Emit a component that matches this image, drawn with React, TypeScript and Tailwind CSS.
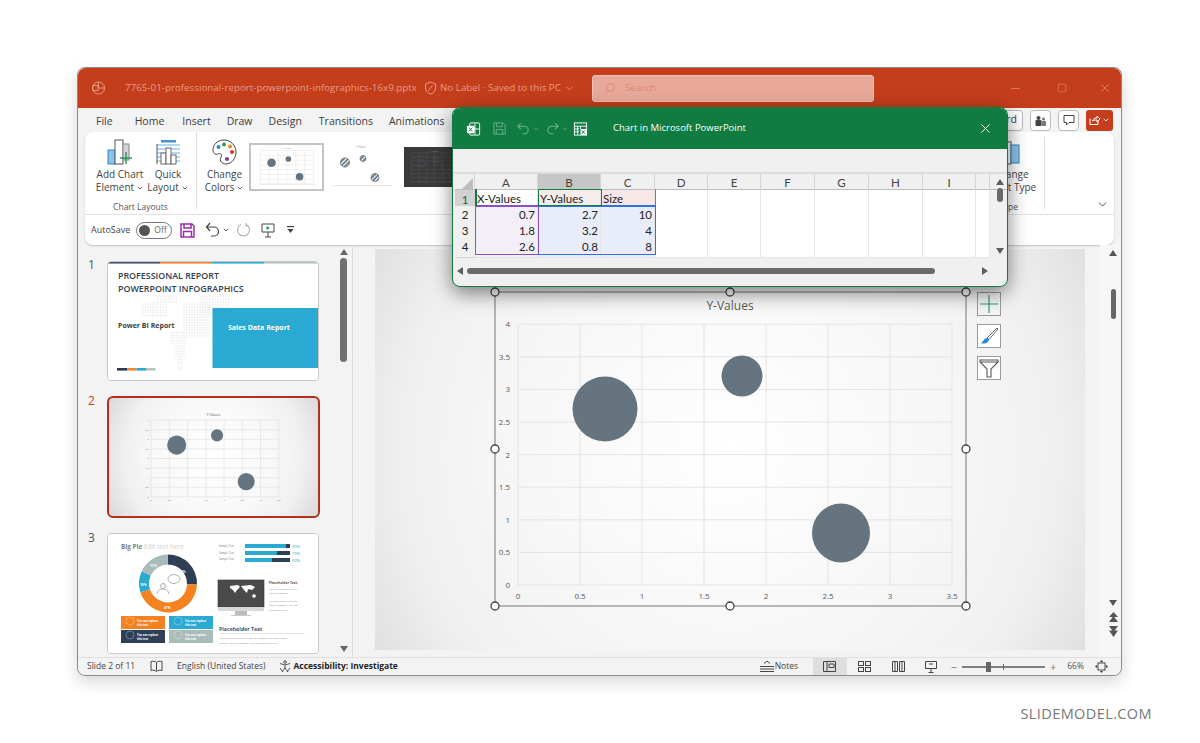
import React from "react";
import { ChevronDown, Search, Minus, Square, X } from "lucide-react";

const xs = [0, 1, 2, 3, 4, 5, 6, 7];
const ys = [0, 1, 2, 3, 4, 5, 6, 7, 8];
const X0 = 518, DX = 62, Y0 = 585, DY = 32.6;

function Chart({ handles, grid = "#e4e4e4" }: { handles?: boolean; grid?: string }) {
  const h: [number, number][] = [[495, 292], [730, 292], [966, 292], [495, 449], [966, 449], [495, 606], [730, 606], [966, 606]];
  return (
    <svg viewBox="375 249 710 401" className="block w-full h-full">
      {handles && <rect x="495" y="292" width="471" height="314" fill="none" stroke="#8a8a8a" strokeWidth="1.2" />}
      {xs.map((i) => <line key={i} x1={X0 + DX * i} x2={X0 + DX * i} y1={Y0 - DY * 8} y2={Y0} stroke={grid} strokeWidth={handles ? 1 : 2} />)}
      {ys.map((i) => <line key={i} x1={X0} x2={X0 + DX * 7} y1={Y0 - DY * i} y2={Y0 - DY * i} stroke={grid} strokeWidth={handles ? 1 : 2} />)}
      <ellipse cx="605" cy="409" rx="32.5" ry="32.5" fill="#65747f" />
      <ellipse cx="742" cy="376" rx="20.5" ry="20.5" fill="#65747f" />
      <ellipse cx="841" cy="533" rx="29" ry="29.5" fill="#65747f" />
      <text x="730" y="310" textAnchor="middle" fontSize="12" fill="#595959">Y-Values</text>
      {["0", "0.5", "1", "1.5", "2", "2.5", "3", "3.5", "4"].map((t, i) => (
        <text key={t} x="510" y={Y0 - DY * i + 3} textAnchor="end" fontSize="8" fill="#595959">{t}</text>
      ))}
      {["0", "0.5", "1", "1.5", "2", "2.5", "3", "3.5"].map((t, i) => (
        <text key={t} x={X0 + DX * i} y="599" textAnchor="middle" fontSize="8" fill="#595959">{t}</text>
      ))}
      {handles && h.map(([x, y], i) => <circle key={i} cx={x} cy={y} r="4" fill="#fff" stroke="#404040" strokeWidth="1.3" />)}
    </svg>
  );
}

function GalleryChart({ striped, dark }: { striped?: boolean; dark?: boolean }) {
  const line = dark ? "#555" : striped ? "#fff" : "#e6e6e6";
  const fill = striped ? "url(#stripes)" : dark ? "none" : "#65747f";
  const stroke = dark ? "#475766" : striped ? "#65747f" : "none";
  return (
    <svg viewBox="0 0 74 47" className="block w-full h-full">
      <defs>
        <pattern id="stripes" width="3" height="3" patternUnits="userSpaceOnUse" patternTransform="rotate(45)">
          <rect width="3" height="3" fill="#fff" />
          <rect width="1.8" height="3" fill="#65747f" />
        </pattern>
      </defs>
      {[0, 1, 2, 3, 4, 5, 6].map((i) => <line key={i} x1={9 + i * 9.5} x2={9 + i * 9.5} y1="6" y2="42" stroke={line} strokeWidth=".6" />)}
      {[0, 1, 2, 3, 4, 5, 6, 7].map((i) => <line key={i} x1="9" x2="66" y1={6 + i * 5.1} y2={6 + i * 5.1} stroke={line} strokeWidth=".6" />)}
      <line x1="9" x2="68" y1="42" y2="42" stroke={dark ? "#555" : "#dcdcdc"} strokeWidth=".7" />
      <circle cx="21" cy="19" r={4.6} fill={fill} stroke={stroke} strokeWidth=".8" />
      <circle cx="39" cy="15" r={3} fill={fill} stroke={stroke} strokeWidth=".8" />
      <circle cx="51" cy="34" r={4} fill={fill} stroke={stroke} strokeWidth=".8" />
      <text x="37" y="4.5" textAnchor="middle" fontSize="2.6" fill="#999">Y-Values</text>
    </svg>
  );
}

function SlideOne() {
  const rows: [number, number, number, number][] = [
    [33, 40, 26, 15], [49, 33, 20, 8], [92, 33, 30, 22], [75, 40, 27, 36], [62, 69, 17, 14], [66, 83, 12, 12], [69, 95, 6, 13],
  ];
  return (
    <svg viewBox="0 0 210 118" className="block w-full h-full">
      <defs>
        <pattern id="dots" width="2.6" height="2.6" patternUnits="userSpaceOnUse">
          <rect width="1.6" height="1.6" fill="#eeeeee" />
        </pattern>
      </defs>
      <rect width="210" height="118" fill="#fff" />
      {rows.map(([x, y, w, h], i) => <rect key={i} x={x} y={y} width={w} height={h} fill="url(#dots)" />)}
      <rect x="0" width="52" height="1.6" fill="#44546a" />
      <rect x="52" width="52" height="1.6" fill="#f58634" />
      <rect x="104" width="52" height="1.6" fill="#2aa9d2" />
      <rect x="156" width="54" height="1.6" fill="#b6c4c2" />
      <text x="10" y="17" fontSize="8.9" fontWeight="600" fill="#333f50">PROFESSIONAL REPORT</text>
      <text x="10" y="30" fontSize="8.9" fontWeight="600" fill="#333f50">POWERPOINT INFOGRAPHICS</text>
      <text x="10" y="66" fontSize="7" fontWeight="700" fill="#404040">Power BI Report</text>
      <rect x="104.5" y="46" width="105.5" height="60" fill="#2aa9d2" />
      <text x="120" y="68" fontSize="7" fontWeight="700" fill="#fff">Sales Data Report</text>
      <rect x="9" y="106" width="10" height="2.6" fill="#2b3a52" />
      <rect x="19" y="106" width="9.5" height="2.6" fill="#f58634" />
      <rect x="28.5" y="106" width="9.5" height="2.6" fill="#2aa9d2" />
      <rect x="38" y="106" width="9.5" height="2.6" fill="#b6c4c2" />
    </svg>
  );
}

function arc(cx: number, cy: number, R: number, r: number, a0: number, a1: number) {
  const p = (a: number, q: number) => [cx + q * Math.sin((a * Math.PI) / 180), cy - q * Math.cos((a * Math.PI) / 180)];
  const [x0, y0] = p(a0, R), [x1, y1] = p(a1, R), [x2, y2] = p(a1, r), [x3, y3] = p(a0, r);
  const l = a1 - a0 > 180 ? 1 : 0;
  return `M${x0} ${y0}A${R} ${R} 0 ${l} 1 ${x1} ${y1}L${x2} ${y2}A${r} ${r} 0 ${l} 0 ${x3} ${y3}Z`;
}

function SlideThree() {
  const bars: [number, number, string, string][] = [[21, 41, "90%", "Sample Text"], [28, 32, "70%", "Sample Text"], [35, 27, "60%", "Sample Text"]];
  const tiles: [number, number, string][] = [[13, 82, "#f58220"], [61, 82, "#2aa9d2"], [13, 96, "#2f3f55"], [61, 96, "#a9bcba"]];
  return (
    <svg viewBox="0 0 210 119" className="block w-full h-full">
      <rect width="210" height="119" fill="#fff" />
      <text x="13" y="14.5" fontSize="6.4" fontWeight="700" fill="#7f7f7f">Big Pie <tspan fontWeight="400" fill="#cfcfcf">Edit text here</tspan></text>
      <path d={arc(60, 49.5, 29, 19, 0, 92)} fill="#2f3f55" />
      <path d={arc(60, 49.5, 29, 19, 92, 252)} fill="#f58220" />
      <path d={arc(60, 49.5, 29, 19, 252, 295)} fill="#2aa9d2" />
      <path d={arc(60, 49.5, 29, 19, 295, 360)} fill="#a9bcba" />
      <text x="71" y="39" fontSize="3.2" fontWeight="700" fill="#fff">19%</text>
      <text x="56" y="75" fontSize="3.2" fontWeight="700" fill="#fff">47%</text>
      <text x="32" y="52" fontSize="3.2" fontWeight="700" fill="#fff">10%</text>
      <text x="42" y="33" fontSize="3.2" fontWeight="700" fill="#fff">17%</text>
      <g fill="none" stroke="#8c8c8c" strokeWidth=".7">
        <ellipse cx="66" cy="45" rx="6" ry="4.5" />
        <circle cx="55" cy="52" r="2.5" />
        <path d="M49 60c1-4 3-5 6-5s5 1 6 5" />
      </g>
      <text x="111" y="13" fontSize="2.6" fill="#777">Sample Text</text>
      <text x="111" y="19.5" fontSize="2.6" fill="#777">Sample Text</text>
      <text x="111" y="26" fontSize="2.6" fill="#777">Sample Text</text>
      {bars.map(([y, w, p], i) => (
        <g key={i}>
          <rect x="137" y={y - 11} width="45" height="4" fill="#2f3f55" />
          <rect x="137" y={y - 11} width={w} height="4" fill="#2aa9d2" />
          <text x="184" y={y - 7} fontSize="4.2" fill="#2aa9d2">{p}</text>
        </g>
      ))}
      <rect x="110" y="46" width="46" height="27" fill="#4a4a4a" stroke="#333" strokeWidth=".6" />
      <path d="M122 52l8-1 2 2-3 3-2 3-2-3-3-2zM133 52l10-1 4 2-3 3-4-1-1 4-3-3zM145 60l3 1-1 3-3-1z" fill="#fff" />
      <rect x="110" y="73" width="46" height="4" fill="#d8d8d8" />
      <rect x="127" y="77" width="12" height="4" fill="#bbb" />
      <rect x="123" y="81" width="20" height="1" fill="#ccc" />
      <text x="161" y="50" fontSize="3.4" fontWeight="700" fill="#555">Placeholder Text</text>
      {["You can replace this text.", "This is a sample."].map((t, i) => <text key={t} x="161" y={55.5 + i * 4.5} fontSize="2.5" fill="#888">{t}</text>)}
      {["You can replace this text.", "This is a sample. You can", "replace this text."].map((t, i) => <text key={t} x="161" y={68 + i * 4.3} fontSize="2.5" fill="#888">{t}</text>)}
      {tiles.map(([x, y, c], i) => (
        <g key={i}>
          <rect x={x} y={y} width="44" height="13" fill={c} />
          <circle cx={x + 9} cy={y + 5} r="4" fill="none" stroke="#fff" strokeOpacity=".5" strokeWidth=".6" />
          <text x={x + 16} y={y + 5.5} fontSize="2.7" fontWeight="700" fill="#fff">You can replace</text>
          <text x={x + 16} y={y + 10} fontSize="2.7" fontWeight="700" fill="#fff">this text</text>
        </g>
      ))}
      <text x="111" y="97" fontSize="5.2" fontWeight="700" fill="#44546a">Placeholder Text</text>
      <line x1="111" x2="197" y1="99.5" y2="99.5" stroke="#e6e6e6" />
      <text x="111" y="105" fontSize="2.5" fill="#888">You can replace this text. This is a sample. You can replace</text>
      <text x="111" y="110" fontSize="2.5" fill="#888">this text. This is a sample. You can replace this text.</text>
    </svg>
  );
}

function Excel() {
  const cols = ["A", "B", "C", "D", "E", "F", "G", "H", "I", ""];
  const grid = "grid grid-cols-[20px_63px_63px_54px_53px_53px_54px_54px_54px_53px_14px]";
  const head = "flex items-center justify-center border-r border-[#d4d4d4] text-[#444]";
  const cell = "border-r border-b border-[#e6e6e6] px-[2px] pb-[2px] flex items-center";
  const data: [string, string, string, string][] = [["2", "0.7", "2.7", "10"], ["3", "1.8", "3.2", "4"], ["4", "2.6", "0.8", "8"]];
  return (
    <div className="absolute left-[374px] top-[39px] w-[556px] h-[180px] rounded-lg border border-[#107c41] bg-[#f0f0f0] shadow-[0_6px_20px_rgba(0,0,0,0.5)] overflow-hidden flex flex-col z-10">
      <div className="h-[41px] shrink-0 bg-[#107c41] flex items-center pl-[13px] pr-[14px] text-white">
        <svg width="15" height="16" viewBox="0 0 16 16" fill="none" className="shrink-0">
          <rect x="4" y="1.5" width="10.5" height="13" rx="1" stroke="#fff" />
          <path d="M9.5 2v12M4 8h10" stroke="#fff" />
          <rect x="1" y="4.5" width="8" height="8" rx="1" fill="#fff" />
          <path d="M3.2 6.5l3.4 4M6.6 6.5l-3.4 4" stroke="#107c41" />
        </svg>
        <svg width="15" height="15" viewBox="0 0 16 16" fill="none" stroke="#6fb08d" className="ml-[11px] shrink-0">
          <path d="M2 2h10l2 2v10H2zM5 2v4h6V2M4.500 14V9h7v5" />
        </svg>
        <svg width="15" height="16" viewBox="0 0 16 16" fill="none" stroke="#6fb08d" strokeWidth="1.2" className="ml-[9px] shrink-0">
          <path d="M5 2L2 5l3 3M2 5h7a4 4 0 0 1 0 8H7" />
        </svg>
        <ChevronDown size={8} color="#6fb08d" className="ml-[1px] shrink-0" />
        <svg width="15" height="16" viewBox="0 0 16 16" fill="none" stroke="#6fb08d" strokeWidth="1.2" className="ml-[5px] shrink-0">
          <path d="M11 2l3 3-3 3M14 5H7a4 4 0 0 0 0 8h2" />
        </svg>
        <ChevronDown size={8} color="#6fb08d" className="ml-[1px] shrink-0" />
        <svg width="15" height="16" viewBox="0 0 16 16" fill="none" className="ml-[4px] shrink-0">
          <rect x="1.5" y="1.5" width="13" height="13" fill="#107c41" stroke="#fff" />
          <path d="M1.5 5h13M1.5 8h5M1.5 11h5M5 5v9M8 5v3" stroke="#fff" />
          <rect x="8" y="8" width="6.5" height="6.5" fill="#fff" />
          <path d="M9.5 9.5l3 3.500M12.5 9.5l-3 3.500" stroke="#107c41" />
        </svg>
        <span className="ml-[25px] text-[9.5px]">Chart in Microsoft PowerPoint</span>
        <X size={15} className="ml-auto" strokeWidth={1.5} />
      </div>
      <div className="h-[25px] shrink-0 border-b-2 border-[#dcdcdc]" />
      <div className="relative font-['Lato',sans-serif] text-[11.5px] text-[#222] ml-[2px]">
        <div className={`${grid} h-[16px] bg-[#f0f0f0] border-b border-[#bdbdbd]`}>
          <div className="flex items-end justify-end border-r border-[#d4d4d4]">
            <svg width="15" height="14" viewBox="0 0 15 14"><path d="M14 1v12H2z" fill="#bdbdbd" /></svg>
          </div>
          {cols.map((c, i) => (
            <div key={i} className={`${head} ${c === "B" ? "bg-[#c6c6c6] text-[#0f6b38]" : ""}`}>{c}</div>
          ))}
          <div className="bg-[#f0f0f0]" />
        </div>
        <div className={`${grid} h-[16px]`}>
          <div className="flex items-center justify-center bg-[#d2d2d2] text-[#0f6b38] pb-[2px]">1</div>
          <div className={`${cell} bg-white`}>X-Values</div>
          <div className={`${cell} bg-[#f7ecec]`}>Y-Values</div>
          <div className={`${cell} bg-[#f9e6e6]`}>Size</div>
          {cols.slice(3).map((_, i) => <div key={i} className={`${cell} bg-white`} />)}
          <div className="bg-[#f0f0f0]" />
        </div>
        {data.map(([r, a, b, c]) => (
          <div key={r} className={`${grid} h-[16px]`}>
            <div className="flex items-center justify-center bg-[#f0f0f0] border-b border-[#d4d4d4] pb-[2px]">{r}</div>
            <div className={`${cell} justify-end bg-[#f3eff9]`}>{a}</div>
            <div className={`${cell} justify-end bg-[#e9edf9]`}>{b}</div>
            <div className={`${cell} justify-end bg-[#e9edf9]`}>{c}</div>
            {cols.slice(3).map((_, i) => <div key={i} className={`${cell} bg-white`} />)}
            <div className="bg-[#f0f0f0]" />
          </div>
        ))}
        <div className="absolute left-[20px] top-[32px] w-[64px] h-[49px] border border-t-0 border-[#8e4fc4] border-r-[1.5px] border-b-[1.5px]" />
        <div className="absolute left-[83px] top-[32px] w-[118px] h-[49px] border-b-[1.5px] border-r-[1.5px] border-[#2f73d9]" />
        <div className="absolute left-[20px] top-[31px] w-[63px] h-[1.5px] bg-[#8e4fc4]" />
        <div className="absolute left-[146px] top-[15px] w-[55px] h-[17px] border-[1.5px] border-l-0 border-[#e05050] border-t-0" />
        <div className="absolute left-[83px] top-[31px] w-[118px] h-[1.5px] bg-[#2f73d9]" />
        <div className="absolute left-[20px] top-[15px] w-[1.5px] h-[17px] bg-[#107c41]" />
        <div className="absolute left-[83px] top-[15px] w-[64px] h-[17px] border-[1.5px] border-[#107c41]" />
        <div className="absolute right-[0px] top-[0px] w-[15px] h-[81px] flex flex-col items-center">
          <svg width="8" height="6" viewBox="0 0 8 6" className="mt-[5px]"><path d="M4 0l4 6H0z" fill="#5e5e5e" /></svg>
          <div className="w-[6px] h-[14px] mt-[3px] rounded-full bg-[#6a6a6a]" />
          <svg width="8" height="6" viewBox="0 0 8 6" className="mt-auto mb-[1px]"><path d="M4 6L8 0H0z" fill="#5e5e5e" /></svg>
        </div>
      </div>
      <div className="flex items-center mt-[13px] pl-[4px]">
        <svg width="6" height="8" viewBox="0 0 6 8"><path d="M0 4l6-4v8z" fill="#5e5e5e" /></svg>
        <div className="ml-[4px] w-[468px] h-[6px] rounded-full bg-[#6a6a6a]" />
        <svg width="6" height="8" viewBox="0 0 6 8" className="ml-[47px]"><path d="M6 4L0 0v8z" fill="#5e5e5e" /></svg>
      </div>
    </div>
  );
}

function Stack({ lines, caret, className = "" }: { lines: string[]; caret?: boolean; className?: string }) {
  return (
    <div className={`text-[10px] leading-[13px] text-[#444] text-center ${className}`}>
      <div>{lines[0]}</div>
      <div className="flex items-center justify-center gap-[2px]">{lines[1]}{caret && <ChevronDown size={8} strokeWidth={2.4} />}</div>
    </div>
  );
}

export default function App() {
  return (
    <div className="relative h-[743px] w-[1200px] overflow-hidden bg-white font-['Open_Sans',sans-serif] pt-[67px] pl-[77px]">
      <div className="relative w-[1045px] h-[609px] flex flex-col rounded-lg border border-[#8c8c8c] bg-[#f3f3f3] shadow-[0_6px_16px_rgba(0,0,0,0.16)]">
        {/* Title bar */}
        <div className="h-[40px] shrink-0 rounded-t-lg bg-[#c43e1c] flex items-center pl-[13px] text-[9.8px] text-[#e79a84]">
          <svg width="14" height="14" viewBox="0 0 14 14" fill="none" stroke="#e79a84" className="shrink-0">
            <circle cx="7.5" cy="7" r="6" />
            <path d="M7.5 1v6h6M2 4.5h5v5H2z" />
          </svg>
          <span className="ml-[20px] whitespace-nowrap">7765-01-professional-report-powerpoint-infographics-16x9.pptx</span>
          <svg width="13" height="14" viewBox="0 0 13 14" fill="none" stroke="#e79a84" className="ml-[7px] shrink-0">
            <path d="M6.5 1l5 2v4c0 3-2 5-5 6-3-1-5-3-5-6V3zM4.5 9.5l4-5" />
          </svg>
          <span className="ml-[3px] whitespace-nowrap">No Label · Saved to this PC</span>
          <ChevronDown size={11} className="ml-[3px] shrink-0" />
          <div className="ml-[17px] w-[282px] h-[27px] shrink-0 rounded-[3px] bg-[#e9a99a] border border-[#efc0b3] flex items-center pl-[11px] text-[#d98b76]">
            <Search size={12} className="-scale-x-100" />
            <span className="ml-[9px]">Search</span>
          </div>
          <Minus size={13} className="ml-[135px] shrink-0" strokeWidth={1.2} />
          <Square size={10} className="ml-[35px] shrink-0" strokeWidth={1.2} />
          <X size={14} className="ml-[31px] shrink-0" strokeWidth={1.2} />
        </div>
        {/* Tabs */}
        <div className="h-[24px] shrink-0 flex items-center pl-[18px] pr-[8px] text-[10.5px] text-[#3c3c3c]">
          <div className="flex items-center pt-[3px]">
            <span>File</span>
            <span className="ml-[22px]">Home</span>
            <span className="ml-[18px]">Insert</span>
            <span className="ml-[16px]">Draw</span>
            <span className="ml-[16px]">Design</span>
            <span className="ml-[17px]">Transitions</span>
            <span className="ml-[16px]">Animations</span>
          </div>
          <div className="ml-auto flex items-center gap-[7px]">
            <div className="h-[21px] px-[5px] flex items-center rounded-[4px] border border-[#bdbdbd] bg-white">Record</div>
            <div className="h-[21px] w-[21px] flex items-center justify-center rounded-[4px] border border-[#bdbdbd] bg-white">
              <svg width="13" height="13" viewBox="0 0 13 13" fill="#444"><circle cx="4.5" cy="4" r="2" /><rect x="1.5" y="6" width="6" height="6" rx="1" /><circle cx="9.5" cy="5" r="1.5" fill="#777" /><rect x="7.5" y="7" width="4.5" height="5" rx="1" fill="#777" /></svg>
            </div>
            <div className="h-[21px] w-[21px] flex items-center justify-center rounded-[4px] border border-[#bdbdbd] bg-white">
              <svg width="12" height="12" viewBox="0 0 12 12" fill="none" stroke="#444"><path d="M1 1.500h10v7H6l-2.500 2.500V8.500H1z" /></svg>
            </div>
            <div className="h-[21px] w-[27px] flex items-center justify-center gap-[1px] rounded-[3px] bg-[#c43e1c]">
              <svg width="12" height="12" viewBox="0 0 12 12" fill="none" stroke="#fff"><path d="M1 4.500v6h8V7M3.500 7c.5-2 2-3 4.500-3V2l3 3-3 3V6c-2 0-3.500.3-4.500 1z" /></svg>
              <ChevronDown size={8} color="#fff" strokeWidth={2.5} />
            </div>
          </div>
        </div>
        {/* Ribbon */}
        <div className="h-[113px] shrink-0 mx-[7px] rounded-lg bg-white shadow-[0_1px_2px_rgba(0,0,0,0.2)] flex flex-col">
          <div className="h-[83px] shrink-0 flex border-b border-[#e3e3e3]">
            <div className="w-[112px] shrink-0 relative flex pt-[7px] pl-[10px] my-[5px] -mt-0 border-r border-[#e0e0e0]">
              <div className="w-[50px] flex flex-col items-center">
                <svg width="27" height="26" viewBox="0 0 27 26" fill="none">
                  <rect x="1" y="11" width="7" height="14" fill="#8fc3e6" stroke="#2b88c8" />
                  <rect x="8" y="1" width="8" height="24" fill="#fff" stroke="#555" />
                  <rect x="16" y="5" width="6" height="16" fill="#d4d4d4" stroke="#888" />
                  <path d="M19 13v12M13 19h12" stroke="#1f9d55" strokeWidth="1.4" />
                </svg>
                <Stack className="mt-[3px]" lines={["Add Chart", "Element"]} caret />
              </div>
              <div className="w-[40px] ml-[3px] flex flex-col items-center">
                <svg width="25" height="26" viewBox="0 0 25 26" fill="none">
                  <rect x="5" y="1" width="15" height="2.500" fill="#4a90d9" />
                  <path d="M1 6h23M1 10h23M1 14h23M1 18h23M1 22h23" stroke="#63b0e6" />
                  <path d="M1 5v20" stroke="#555" />
                  <rect x="5" y="14" width="5" height="11" fill="#fff" stroke="#666" />
                  <rect x="10" y="9" width="5" height="16" fill="#fff" stroke="#666" />
                  <rect x="15" y="16" width="5" height="9" fill="#fff" stroke="#666" />
                </svg>
                <Stack className="mt-[3px]" lines={["Quick", "Layout"]} caret />
              </div>
              <div className="absolute left-0 right-0 top-[69px] text-center text-[8.5px] text-[#555]">Chart Layouts</div>
            </div>
            <div className="w-[52px] shrink-0 pt-[7px] pl-[3px] flex flex-col items-center">
              <svg width="25" height="26" viewBox="0 0 25 26" fill="none">
                <path d="M12 1C5 1 1 6 1 11c0 4 3 5 5 4s5 0 3 3c-2 4 1 7 5 7 6 0 10-6 10-12S19 1 12 1z" fill="#fff" stroke="#444" />
                <circle cx="6.500" cy="8" r="2" fill="#2b88d8" />
                <circle cx="12" cy="5.500" r="2" fill="#2e9e4f" />
                <circle cx="18" cy="7.500" r="2" fill="#f08020" />
                <circle cx="20" cy="13" r="2" fill="#e02d2d" />
                <circle cx="15" cy="20" r="2" fill="#8030a0" />
              </svg>
              <Stack className="mt-[3px]" lines={["Change", "Colors"]} caret />
            </div>
            <div className="ml-0 pt-[11px] flex shrink-0">
              <div className="w-[75px] h-[48px] border-2 border-[#c4c4c4]"><GalleryChart /></div>
              <div className="w-[74px] h-[48px]"><GalleryChart striped /></div>
              <div className="w-[60px] h-[40px] mt-[4px] ml-[6px] bg-[#3a3a3a]"><GalleryChart dark /></div>
            </div>
            <div className="flex-1" />
            <div className="w-[50px] shrink-0 pt-[7px] flex flex-col items-center relative">
              <svg width="20" height="26" viewBox="0 0 20 26" fill="none">
                <rect x="1" y="3" width="9" height="22" fill="#fff" stroke="#555" />
                <rect x="10" y="6" width="8" height="18" fill="#8fc3e6" stroke="#2b88c8" />
              </svg>
              <Stack className="mt-[3px] whitespace-nowrap" lines={["Change", "Chart Type"]} />
              <div className="absolute left-[13px] top-[69px] text-[8.5px] text-[#555]">Type</div>
            </div>
            <div className="w-[70px] shrink-0 my-[5px] ml-[8px] border-l border-[#e0e0e0] relative">
              <ChevronDown size={13} className="absolute right-[5px] -bottom-[2px] text-[#333]" strokeWidth={1.6} />
            </div>
          </div>
          <div className="flex-1 flex items-center pl-[6px] text-[#444]">
            <span className="text-[9px]">AutoSave</span>
            <div className="ml-[6px] w-[36px] h-[17px] rounded-full border border-[#777] flex items-center pl-[2px]">
              <div className="w-[11px] h-[11px] rounded-full bg-[#555]" />
              <span className="ml-[4px] text-[8.500px] text-[#666]">Off</span>
            </div>
            <svg width="15" height="15" viewBox="0 0 15 15" fill="none" stroke="#9b30a8" strokeWidth="1.5" className="ml-[8px]">
              <path d="M1 1h11l2 2v11H1zM4 1v4h7V1M3.500 14V8.500h8V14" />
            </svg>
            <svg width="15" height="16" viewBox="0 0 15 16" fill="none" stroke="#444" strokeWidth="1.200" className="ml-[10px]">
              <path d="M5 1L1.500 5 5 9M1.500 5H9a4.500 4.500 0 0 1 0 9H6" />
            </svg>
            <ChevronDown size={8} strokeWidth={2.5} className="ml-[2px]" />
            <svg width="15" height="16" viewBox="0 0 15 16" fill="none" stroke="#b5b5b5" strokeWidth="1.200" className="ml-[6px]">
              <path d="M10 2.500a6 6 0 1 1-5 0M10 1v3h3" />
            </svg>
            <svg width="14" height="15" viewBox="0 0 14 15" fill="none" stroke="#444" className="ml-[10px]">
              <path d="M1 1h12v8H1zM7 9v5M4 14h6" />
              <path d="M5.500 3l3.500 2-3.500 2z" fill="#1f9d55" stroke="none" />
            </svg>
            <svg width="9" height="8" viewBox="0 0 9 8" className="ml-[11px]" fill="#444"><rect x="1" y="0" width="7" height="1.200" /><path d="M1.500 3h6L4.500 7z" /></svg>
          </div>
        </div>
        {/* Body */}
        <div className="flex-1 min-h-0 flex">
          <div className="w-[275px] shrink-0 flex border-r border-[#dcdcdc]">
            <div className="w-[260px] shrink-0 pt-[17px] flex flex-col gap-[16px] overflow-hidden">
              <div className="flex">
                <span className="w-[30px] pl-[10px] text-[12px] leading-[6px] text-[#555]">1</span>
                <div className="w-[210px] h-[118px] shrink-0 rounded-[4px] overflow-hidden border border-[#c8c8c8] box-content -m-px"><SlideOne /></div>
              </div>
              <div className="flex">
                <span className="w-[29px] pl-[10px] text-[12px] leading-[10px] text-[#c43e1c]">2</span>
                <div className="w-[213px] h-[122px] shrink-0 rounded-[6px] overflow-hidden border-2 border-[#b5301a] bg-[radial-gradient(circle,#ffffff_0%,#f8f8f8_50%,#f0f0f0_75%,#d9d9d9_100%)]"><Chart grid="#dcdcdc" /></div>
              </div>
              <div className="flex">
                <span className="w-[30px] pl-[10px] text-[12px] leading-[8px] text-[#555]">3</span>
                <div className="w-[210px] h-[119px] shrink-0 rounded-[4px] overflow-hidden border border-[#c8c8c8] box-content -m-px"><SlideThree /></div>
              </div>
            </div>
            <div className="w-[9px] ml-[1px] shrink-0 flex flex-col items-center pt-[4px] pb-[5px]">
              <svg width="8" height="6" viewBox="0 0 8 6"><path d="M4 0l4 6H0z" fill="#666" /></svg>
              <div className="w-[7px] h-[104px] mt-[3px] rounded-full bg-[#707070]" />
              <svg width="8" height="6" viewBox="0 0 8 6" className="mt-auto"><path d="M4 6L8 0H0z" fill="#666" /></svg>
            </div>
          </div>
          <div className="w-[747px] shrink-0 pl-[22px] pt-[4px]">
            <div className="relative w-[710px] h-[401px] bg-[radial-gradient(circle,#ffffff_0%,#fbfbfb_25%,#f5f5f5_60%,#f0f0f0_80%,#e0e0e0_100%)]">
              <Chart handles />
              <div className="absolute left-[602px] top-[43px] flex flex-col gap-[8px]">
                <div className="w-[24px] h-[24px] border border-[#9a9a9a] bg-[#f4f4f4] flex items-center justify-center">
                  <svg width="18" height="18" viewBox="0 0 18 18"><path d="M9 0v18M0 9h18" stroke="#2e9e6a" strokeWidth="1.200" /></svg>
                </div>
                <div className="w-[24px] h-[24px] border border-[#9a9a9a] bg-white flex items-center justify-center">
                  <svg width="20" height="20" viewBox="0 0 20 20" fill="none">
                    <path d="M18 2L8 12l2 1.500L19 3z" fill="#fff" stroke="#555" strokeWidth=".9" />
                    <path d="M8 12c-3 0-3 3-6 5 3 1 7 1 8-3.500z" fill="#2b88d8" />
                  </svg>
                </div>
                <div className="w-[24px] h-[24px] border border-[#9a9a9a] bg-white flex items-center justify-center">
                  <svg width="20" height="20" viewBox="0 0 20 20" fill="none" stroke="#555" strokeWidth="1.100">
                    <path d="M1 2h18v2l-7 7v8H8v-8L1 4zM1 4h18" />
                  </svg>
                </div>
              </div>
            </div>
          </div>
          <div className="w-[21px] shrink-0 bg-[#f6f6f6] flex flex-col items-center pl-[5px] pt-[5px] pb-[20px]">
            <svg width="8" height="6" viewBox="0 0 8 6"><path d="M4 0l4 6H0z" fill="#555" /></svg>
            <div className="w-[5px] h-[30px] mt-[33px] rounded-full bg-[#666]" />
            <svg width="8" height="6" viewBox="0 0 8 6" className="mt-auto"><path d="M4 6L8 0H0z" fill="#555" /></svg>
            <svg width="9" height="11" viewBox="0 0 9 11" className="mt-[6px]" fill="#555"><path d="M4.500 0L9 5H0zM4.500 4L9 10H0z" /></svg>
            <svg width="9" height="11" viewBox="0 0 9 11" className="mt-[3px]" fill="#555"><path d="M0 0h9L4.500 6zM0 4.500h9L4.500 11z" /></svg>
          </div>
        </div>
        {/* Status */}
        <div className="h-[18px] shrink-0 rounded-b-lg bg-[#f3f3f3] border-t border-[#e0e0e0] flex items-center pl-[9px] text-[8.500px] text-[#444]">
          <span>Slide 2 of 11</span>
          <svg width="13" height="13" viewBox="0 0 13 13" fill="none" stroke="#444" className="ml-[15px]">
            <path d="M1 1.500c2-.5 4-.5 5.500 1 1.500-1.500 3.500-1.500 5.500-1v9c-2-.5-4-.5-5.500 1-1.500-1.500-3.500-1.500-5.500-1zM6.500 2.500v8" />
          </svg>
          <span className="ml-[14px]">English (United States)</span>
          <svg width="12" height="13" viewBox="0 0 12 13" fill="none" stroke="#444" strokeWidth=".9" className="ml-[14px]">
            <circle cx="6" cy="2" r="1.300" />
            <path d="M1 3.500l5 1.500 5-1.500M6 5v3M6 8l-3 4M6 8l3 4M1 8l3 4M11 8l-3 4" />
          </svg>
          <span className="ml-[2px] font-bold text-[#222]">Accessibility: Investigate</span>
          <div className="ml-auto flex items-center h-full">
            <svg width="14" height="13" viewBox="0 0 14 13" fill="none" stroke="#444">
              <path d="M0 6.500h14M0 9h14M0 11.500h14M4 3.500L7 1l3 2.500" />
            </svg>
            <span className="ml-[1px] w-[38px]">Notes</span>
            <div className="w-[34px] h-full bg-[#dedede] flex items-center justify-center">
              <svg width="13" height="11" viewBox="0 0 13 11" fill="none" stroke="#444"><path d="M.5.500h12v10H.5zM4 .500v10M6 3h5v3.500H6z" /></svg>
            </div>
            <svg width="13" height="11" viewBox="0 0 13 11" fill="none" stroke="#444" className="ml-[11px]"><rect x=".5" y=".5" width="5" height="4" /><rect x="7.500" y=".5" width="5" height="4" /><rect x=".5" y="6.500" width="5" height="4" /><rect x="7.500" y="6.500" width="5" height="4" /></svg>
            <svg width="13" height="11" viewBox="0 0 13 11" fill="none" stroke="#444" className="ml-[21px]"><path d="M.5.500h5v10h-5zM7.500.500h5v10h-5zM3 .5v10M10 .5v10" /></svg>
            <svg width="12" height="12" viewBox="0 0 12 12" fill="none" stroke="#444" className="ml-[20px]"><path d="M.5.500h11v7H.5zM6 7.500v4M3.500 11.500h5" /><path d="M4 3h4" /></svg>
            <span className="ml-[14px] text-[#777] text-[11px] leading-none">−</span>
            <div className="relative ml-[5px] w-[83px] h-[2px] bg-[#808080]">
              <div className="absolute left-[24px] -top-[4px] w-[5px] h-[10px] bg-[#666]" />
              <div className="absolute left-[41px] -top-[2px] w-[1px] h-[6px] bg-[#666]" />
            </div>
            <span className="ml-[5px] text-[#777] text-[11px] leading-none">+</span>
            <span className="ml-[11px] text-[#555]">66%</span>
            <svg width="13" height="13" viewBox="0 0 13 13" fill="none" stroke="#444" className="ml-[11px] mr-[13px]">
              <rect x="3" y="3" width="7" height="7" />
              <path d="M6.500 0L4.800 2h3.400zM6.500 13l-1.700-2h3.400zM0 6.500l2-1.700v3.400zM13 6.500l-2-1.700v3.400z" fill="#444" stroke="none" />
            </svg>
          </div>
        </div>
        <Excel />
      </div>
      <div className="mt-[27px] mr-[48px] text-right text-[14.5px] tracking-[0.4px] text-[#777]">SLIDEMODEL.COM</div>
    </div>
  );
}
